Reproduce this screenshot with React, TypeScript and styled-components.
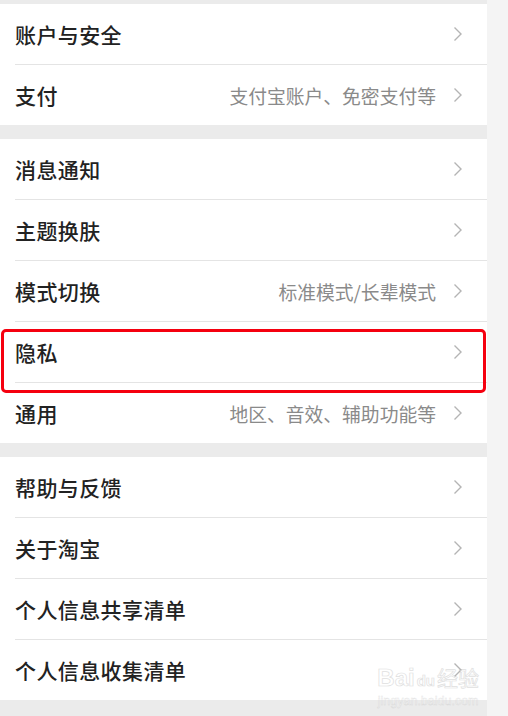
import * as React from "react";
import styled, { createGlobalStyle } from "styled-components";

interface SettingItem {
  title: string;
  hint?: string;
  highlighted?: boolean;
}

const sections: SettingItem[][] = [
  [{ title: "账户与安全" }, { title: "支付", hint: "支付宝账户、免密支付等" }],
  [
    { title: "消息通知" },
    { title: "主题换肤" },
    { title: "模式切换", hint: "标准模式/长辈模式" },
    { title: "隐私", highlighted: true },
    { title: "通用", hint: "地区、音效、辅助功能等" },
  ],
  [
    { title: "帮助与反馈" },
    { title: "关于淘宝" },
    { title: "个人信息共享清单" },
    { title: "个人信息收集清单" },
  ],
];

const Chevron = () => (
  <svg width="10" height="16" viewBox="0 0 10 16" fill="none">
    <path d="M1.5 1.5 L8 8 L1.5 14.5" stroke="#b4b4b4" strokeWidth="1.4" />
  </svg>
);

export default function App() {
  return (
    <>
      <GlobalStyle />
      <Page>
        <Column>
          {sections.map((items, i) => (
            <Section key={i}>
              {items.map((item) => (
                <Row key={item.title} $highlighted={item.highlighted}>
                  <RowInner>
                    <Title>{item.title}</Title>
                    <Trailing>
                      {item.hint && <Hint>{item.hint}</Hint>}
                      <Chevron />
                    </Trailing>
                  </RowInner>
                </Row>
              ))}
            </Section>
          ))}
          <Watermark>
            <WatermarkLogo>
              Bai<Paw>du</Paw><Jingyan>经验</Jingyan>
            </WatermarkLogo>
            <WatermarkUrl>jingyan.baidu.com</WatermarkUrl>
          </Watermark>
        </Column>
        <Gutter />
      </Page>
    </>
  );
}

const GlobalStyle = createGlobalStyle`
  html, body {
    margin: 0;
    padding: 0;
    background: #f4f4f4;
  }
  body {
    font-family: "Noto Sans CJK SC", "Noto Sans", sans-serif;
  }
`;

const Page = styled.div`
  display: flex;
  width: 508px;
  height: 716px;
  overflow: hidden;
`;

const Column = styled.div`
  position: relative;
  width: 487px;
  display: flex;
  flex-direction: column;
  gap: 14px;
  padding-top: 4px;
  background: #ebebeb;
`;

const Gutter = styled.div`
  flex: 1;
  background: #f4f4f4;
`;

const Section = styled.section`
  background: #fff;
  display: flex;
  flex-direction: column;
`;

const Row = styled.div<{ $highlighted?: boolean }>`
  position: relative;
  padding-left: 15px;

  &:last-child > div {
    border-bottom: none;
    height: 60px;
  }

  ${({ $highlighted }) =>
    $highlighted &&
    `
    &::after {
      content: "";
      position: absolute;
      left: 1px;
      right: 1px;
      top: 7px;
      bottom: -10px;
      border: 3px solid #f5000f;
      border-radius: 5px;
      z-index: 2;
      pointer-events: none;
    }
  `}
`;

const RowInner = styled.div`
  display: flex;
  align-items: center;
  justify-content: space-between;
  height: 60px;
  padding-right: 24px;
  border-bottom: 1px solid #e4e4e4;
`;

const Title = styled.span`
  font-size: 21px;
  font-weight: 500;
  color: #222;
  letter-spacing: 0.4px;
`;

const Trailing = styled.div`
  display: flex;
  align-items: center;
  gap: 17px;
`;

const Hint = styled.span`
  font-size: 18.8px;
  color: #8a8a8a;
`;

const Watermark = styled.div`
  position: absolute;
  right: 8px;
  bottom: 8px;
  display: flex;
  flex-direction: column;
  align-items: center;
  opacity: 0.4;
  pointer-events: none;
  z-index: 3;
`;

const WatermarkLogo = styled.div`
  font-family: "Liberation Sans", sans-serif;
  font-size: 24px;
  font-weight: 700;
  color: #fff;
  -webkit-text-stroke: 0.7px #b0b0b0;
  line-height: 1;
`;

const Paw = styled.span`
  font-size: 15px;
  margin: 0 2px;
`;

const Jingyan = styled.span`
  font-family: "Noto Sans CJK SC", sans-serif;
  font-weight: 400;
  font-size: 21px;
`;

const WatermarkUrl = styled.div`
  font-family: "Liberation Sans", sans-serif;
  font-size: 12.5px;
  color: #fff;
  -webkit-text-stroke: 0.4px #b8b8b8;
  margin-top: 4px;
`;
